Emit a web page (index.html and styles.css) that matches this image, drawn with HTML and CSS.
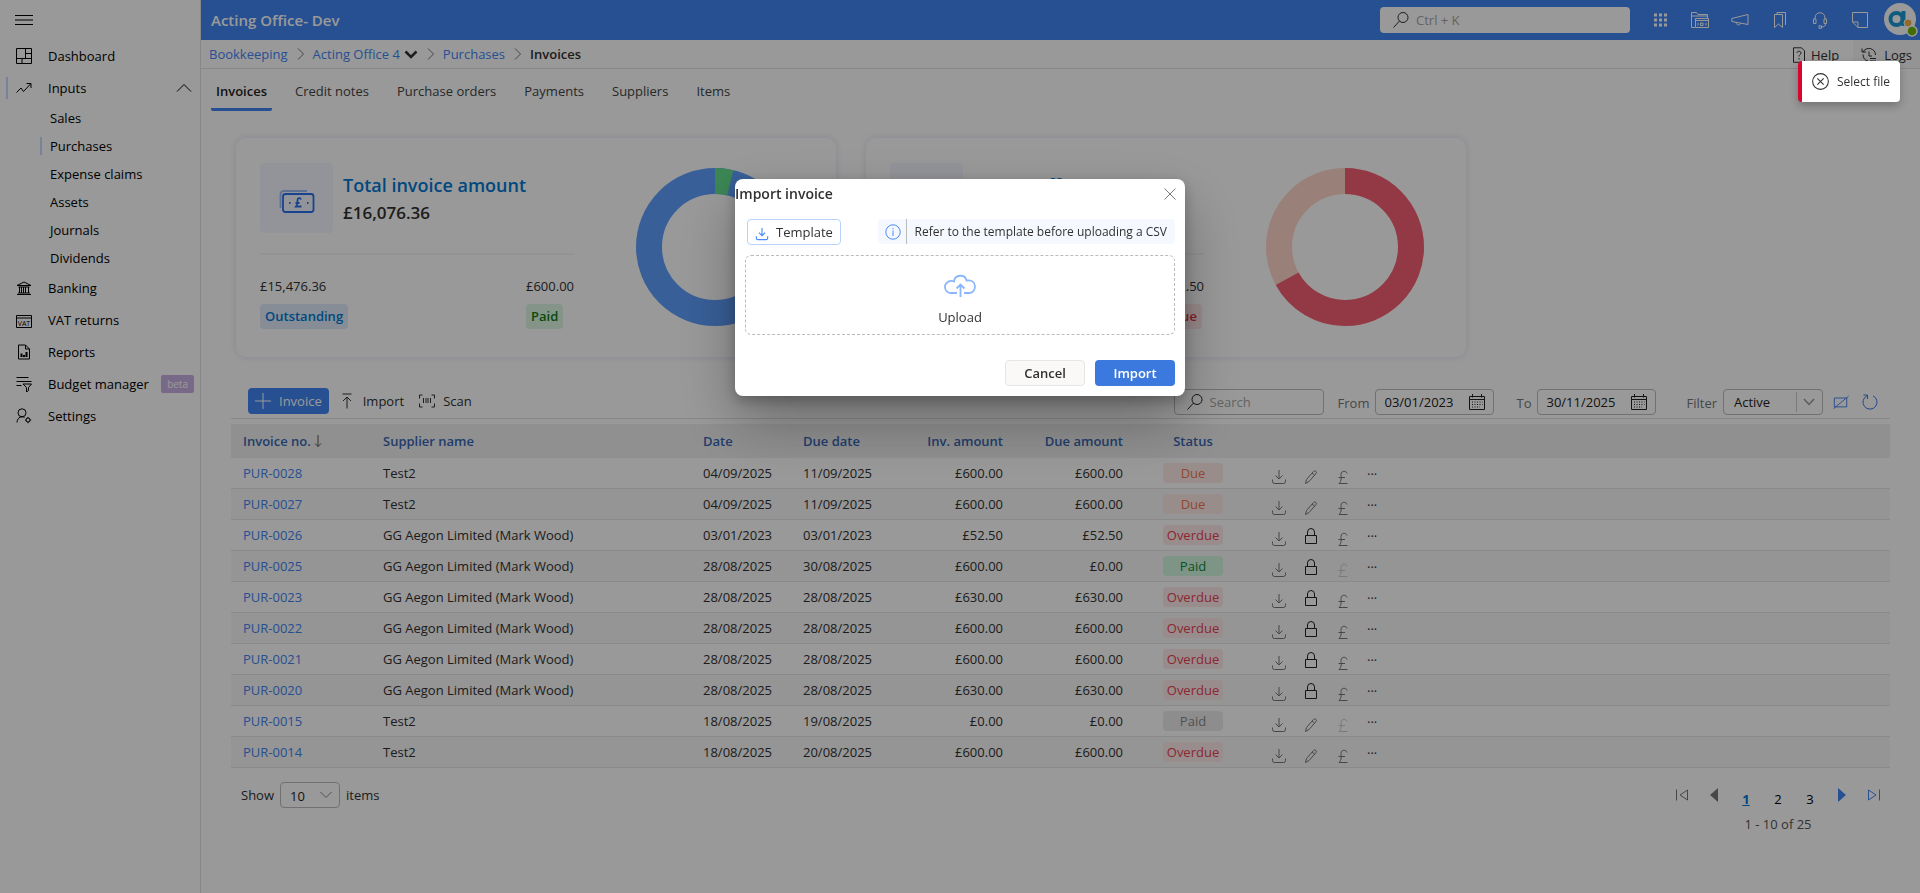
FILE: index.html
```html
<!DOCTYPE html>
<html lang="en">
<head>
<meta charset="utf-8">
<title>Acting Office - Purchases</title>
<link rel="stylesheet" href="styles.css">
</head>
<body>
<svg class="sprite" aria-hidden="true">
  <symbol id="i-down" viewBox="0 0 16 16"><path d="M8 1v9M4.500 6.500 8 10l3.500-3.500M1.500 10.500v2a2 2 0 0 0 2 2h9a2 2 0 0 0 2-2v-2"/></symbol>
  <symbol id="i-pencil" viewBox="0 0 16 16"><path d="M2.500 14.500l1-4L10.500 2.500a1.500 1.500 0 0 1 2.500 2L6 12.500zM9 4l2.500 2"/></symbol>
  <symbol id="i-lock" viewBox="0 0 16 16"><path d="M2.500 7.500h11v8h-11zM4.500 7.500V4a3.500 3.500 0 0 1 7 0v3.500"/></symbol>
  <symbol id="i-pound" viewBox="0 0 16 16"><path d="M12 4.500C11.500 1.500 6 1.200 6 5.500c0 3 1 6-2 9h8.500M3.500 8.500h6.500"/></symbol>
  <symbol id="i-search" viewBox="0 0 18 18"><path d="M11 1.500a5 5 0 1 1 0 10 5 5 0 0 1 0-10zM7.500 10 1.500 16.500"/></symbol>
  <symbol id="i-right" viewBox="0 0 8 12"><path d="M1 .5 6.500 6 1 11.500"/></symbol>
  <symbol id="i-cal" viewBox="0 0 18 16"><path d="M1.500 2.500h15v13h-15zM1.500 5.500h15M4.500 0v3.500M13.500 0v3.500"/><path stroke-dasharray="1 1.500" d="M4 8h10.500M4 10.500h10.500M4 13h8"/></symbol>
</svg>

<div class="app">
  <aside class="side">
    <button class="burger" aria-label="Menu"><svg viewBox="0 0 18 10"><path d="M0 .5h18M0 5h18M0 9.500h18"/></svg></button>
    <nav>
      <a class="item" href="#"><svg viewBox="0 0 16 16"><path d="M.5.500h15v15H.5zM9.500.500v10M.5 10.500h15M9.500 5.500h6M6 10.500v5"/></svg><span>Dashboard</span></a>
      <a class="item current" href="#"><svg viewBox="0 0 16 16"><path d="M.5 12.500 5 8l2.500 3.500L14.500 4M10.500 3.500h4.500V8"/></svg><span>Inputs</span><svg class="fold" viewBox="0 0 16 10"><path d="M1 8.500 8 1.500l7 7"/></svg></a>
      <a class="sub" href="#">Sales</a>
      <a class="sub current" href="#">Purchases</a>
      <a class="sub" href="#">Expense claims</a>
      <a class="sub" href="#">Assets</a>
      <a class="sub" href="#">Journals</a>
      <a class="sub" href="#">Dividends</a>
      <a class="item" href="#"><svg viewBox="0 0 16 16"><path d="M1 5.500 8 2l7 3.500zM2.500 7h11M3.500 7v6M5.500 7v6M7.500 7v6M9.500 7v6M12.500 7v6M2 13h12M1 14.500h14"/></svg><span>Banking</span></a>
      <a class="item" href="#"><svg viewBox="0 0 16 16" aria-hidden="true"><path d="M.5 3.500h15v12H.5zM.5 6h15"/><text x="8" y="13.500" text-anchor="middle">VAT</text></svg><span>VAT returns</span></a>
      <a class="item" href="#"><svg viewBox="0 0 16 16"><path d="M2.500 1h7l4 4v10h-11zM9.500 1v4h4"/><path class="thick" d="M5.500 9.500V13M8 11v2M10.500 8v5"/></svg><span>Reports</span></a>
      <a class="item" href="#"><svg viewBox="0 0 16 16"><path d="M.5 1.500h12M.5 5.500h15M.5 9.500h5M7 8h8.500l-3 3.500v3l-2 1.500v-4.500z"/></svg><span>Budget manager</span><em class="beta">beta</em></a>
      <a class="item" href="#"><svg viewBox="0 0 16 16"><path d="M6 .8a4 4 0 1 1 0 8 4 4 0 0 1 0-8zM1 14.500c0-3 2-5.700 5-5.700 1 0 2 .2 2.500.7M12 10a2 2 0 1 1 0 4 2 2 0 0 1 0-4zM12 9v1M12 14v1.200M9 12h1M14 12h1.200M10 10l.6.600M13.500 13.500l.6.600M14 10l-.6.600M10 14l.6-.6"/></svg><span>Settings</span></a>
    </nav>
  </aside>

  <div class="main">
    <header class="top">
      <h1>Acting Office- Dev</h1>
      <label class="global"><svg viewBox="0 0 18 18"><use href="#i-search"/></svg><input type="text" placeholder="Ctrl + K" aria-label="Search everything"></label>
      <div class="tools">
        <button aria-label="Apps"><svg viewBox="0 0 18 18"><path class="dots" d="M3 4h3M8 4h3M13 4h3M3 9h3M8 9h3M13 9h3M3 14h3M8 14h3M13 14h3"/></svg></button>
        <button aria-label="Files"><svg viewBox="0 0 18 18"><path d="M4 16.500H.5v-15h5l1.500 2h9.500V7M.5 5h16M4.500 7.500h13v9h-13zM4.500 9.500h13M7 12v2.500M9.500 12h2.500v2.500H9.500zM15 12v2.500"/></svg></button>
        <button aria-label="Announcements"><svg viewBox="0 0 18 18"><path d="M.8 7.500 17 3.500v10L.8 10.500zM5 11.500c0 3 4.500 3 4.500.8"/></svg></button>
        <button aria-label="Bookmarks"><svg viewBox="0 0 18 18"><path d="M3.500 3.500h8v13l-4-3.500-4 3.500zM6 3.500v-2h8.500V14"/></svg></button>
        <button aria-label="Support"><svg viewBox="0 0 18 18"><path d="M4 8V7c0-7 10-7 10 0v1M2.500 8H5v4.500H2.500zM13 8h2.500v4.500H13zM14.500 12.500c0 2.500-1.500 3.500-4 3.500M8 14.800h2.500v2.500H8z"/></svg></button>
        <button aria-label="Notes"><svg viewBox="0 0 18 18"><path d="M1.500 1.500h15v15H7l-5.500-5.500zM7 16.500V11H1.500"/></svg></button>
      </div>
      <button class="avatar" aria-label="Account"><svg viewBox="0 0 36 36"><circle cx="16" cy="16" r="16" fill="#fff"/><circle cx="12.500" cy="16" r="6" fill="none" stroke="#1c9ad6" stroke-width="4"/><path d="M19.500 8v15" stroke="#1c9ad6" stroke-width="4"/><circle cx="24" cy="20" r="4" fill="#f2b14e" stroke="#fff"/><circle cx="28" cy="28" r="5" fill="#6bb700" stroke="#fff" stroke-width="1.500"/></svg></button>
    </header>

    <div class="crumbs">
      <a href="#">Bookkeeping</a><svg class="sep" viewBox="0 0 8 12"><use href="#i-right"/></svg>
      <a href="#">Acting Office 4</a><svg class="drop" viewBox="0 0 14 9"><path d="M1.500 1.500 7 7l5.500-5.500"/></svg><svg class="sep" viewBox="0 0 8 12"><use href="#i-right"/></svg>
      <a href="#">Purchases</a><svg class="sep" viewBox="0 0 8 12"><use href="#i-right"/></svg>
      <strong>Invoices</strong>
      <div class="links">
        <button><svg viewBox="0 0 16 16"><path d="M2.500.800h8l3 3v11.500h-11zM6 6c0-2.500 4-2.300 4 0 0 1.500-2 1.500-2 3.500M8 11v1.500"/></svg>Help</button>
        <button class="logs"><svg viewBox="0 0 16 16"><path d="M2 5C5-1 14.500 1 14.500 8M1 1.500V5h4M2 7.500C2 11 4 13.500 7 14M8 4.500V9h3M9 11.500h6M9 14h6"/></svg>Logs</button>
      </div>
    </div>

    <nav class="tabs">
      <a class="on" href="#">Invoices</a><a href="#">Credit notes</a><a href="#">Purchase orders</a><a href="#">Payments</a><a href="#">Suppliers</a><a href="#">Items</a>
    </nav>

    <section class="cards">
      <article class="card">
        <div class="facts">
          <div class="lead">
            <div class="tile"><svg viewBox="0 0 36 24"><path class="pale" d="M1.500 18V4a3 3 0 0 1 3-3H28"/><rect x="4" y="4" width="30.500" height="18" rx="2.500"/><path d="M22 9.500c-.5-2-3.500-2-3.500.5 0 2 .5 4-1.500 6.500h5.500M16.500 13h4M10 13h1.500M28 13h1.500"/></svg></div>
            <div><h2>Total invoice amount</h2><p class="sum">£16,076.36</p></div>
          </div>
          <div class="split">
            <div><p>£15,476.36</p><span class="tag blue">Outstanding</span></div>
            <div><p>£600.00</p><span class="tag green">Paid</span></div>
          </div>
        </div>
        <svg class="donut" viewBox="0 0 158 158"><g fill="none" stroke-width="26"><circle cx="79" cy="79" r="66" stroke="#5f9fff"/><circle cx="79" cy="79" r="66" stroke="#64df8e" pathLength="100" stroke-dasharray="3.730 96.270" transform="rotate(-90 79 79)"/></g></svg>
      </article>
      <article class="card">
        <div class="facts">
          <div class="lead">
            <div class="tile"></div>
            <div><h2>Money off</h2><p class="sum">£15,476.36</p></div>
          </div>
          <div class="split">
            <div><p>£5,123.86</p><span class="tag peach">Due</span></div>
            <div><p>£10,352.50</p><span class="tag red">Overdue</span></div>
          </div>
        </div>
        <svg class="donut" viewBox="0 0 158 158"><g fill="none" stroke-width="26"><circle cx="79" cy="79" r="66" stroke="#ffd5c9"/><circle cx="79" cy="79" r="66" stroke="#f66073" pathLength="100" stroke-dasharray="67 33" transform="rotate(-90 79 79)"/></g></svg>
      </article>
    </section>

    <section class="list">
      <div class="bar">
        <button class="new"><svg viewBox="0 0 16 16"><path d="M8 0v16M0 8h16"/></svg>Invoice</button>
        <button class="plain"><svg viewBox="0 0 16 16"><path d="M3.500 1h9M8 15.500V4M4 8l4-4 4 4"/></svg>Import</button>
        <button class="plain scan"><svg viewBox="0 0 16 16"><path d="M3.500 2H.5v3.500M12.500 2h3v3.500M3.500 14H.5v-3.500M12.500 14h3v-3.500M4.500 5v5M7 5v5M9 5v5M11.500 5v5"/></svg>Scan</button>
        <div class="filters">
          <label class="field find"><svg viewBox="0 0 18 18"><use href="#i-search"/></svg><input type="text" placeholder="Search" aria-label="Search"></label>
          <label for="from">From</label>
          <div class="field date"><input id="from" type="text" value="03/01/2023"><svg viewBox="0 0 18 16"><use href="#i-cal"/></svg></div>
          <label for="to" class="gap">To</label>
          <div class="field date"><input id="to" type="text" value="30/11/2025"><svg viewBox="0 0 18 16"><use href="#i-cal"/></svg></div>
          <label for="state" class="wide">Filter</label>
          <div class="field pick"><select id="state"><option>Active</option></select><svg viewBox="0 0 12 8"><path d="M1 1l5 5.500L11 1"/></svg></div>
          <button class="act" aria-label="Clear filter"><svg viewBox="0 0 18 16"><path d="M1.500 3.500h14v10h-14zM.5 15.500 17.500 1.500"/></svg></button>
          <button class="act" aria-label="Refresh"><svg viewBox="0 0 16 16"><path d="M5 1.800a7 7 0 1 0 6 0M1.500 1h4v4"/></svg></button>
        </div>
      </div>

      <table>
        <colgroup><col class="c-no"><col class="c-sup"><col class="c-date"><col class="c-date"><col class="c-inv"><col class="c-due"><col class="c-stat"><col></colgroup>
        <thead><tr><th>Invoice no. <svg class="sort" viewBox="0 0 8 12"><path d="M4 0v11.500M1 8.500l3 3 3-3"/></svg></th><th>Supplier name</th><th>Date</th><th>Due date</th><th class="num">Inv. amount</th><th class="num">Due amount</th><th class="mid">Status</th><th></th></tr></thead>
        <tbody>
          <tr><td><a href="#">PUR-0028</a></td><td>Test2</td><td>04/09/2025</td><td>11/09/2025</td><td class="num">£600.00</td><td class="num">£600.00</td><td class="mid"><span class="pill due">Due</span></td><td><div class="ops"><button aria-label="Download"><svg><use href="#i-down"/></svg></button><button aria-label="Edit"><svg><use href="#i-pencil"/></svg></button><button aria-label="Pay"><svg><use href="#i-pound"/></svg></button><button class="more" aria-label="More">···</button></div></td></tr>
          <tr><td><a href="#">PUR-0027</a></td><td>Test2</td><td>04/09/2025</td><td>11/09/2025</td><td class="num">£600.00</td><td class="num">£600.00</td><td class="mid"><span class="pill due">Due</span></td><td><div class="ops"><button aria-label="Download"><svg><use href="#i-down"/></svg></button><button aria-label="Edit"><svg><use href="#i-pencil"/></svg></button><button aria-label="Pay"><svg><use href="#i-pound"/></svg></button><button class="more" aria-label="More">···</button></div></td></tr>
          <tr><td><a href="#">PUR-0026</a></td><td>GG Aegon Limited (Mark Wood)</td><td>03/01/2023</td><td>03/01/2023</td><td class="num">£52.50</td><td class="num">£52.50</td><td class="mid"><span class="pill over">Overdue</span></td><td><div class="ops"><button aria-label="Download"><svg><use href="#i-down"/></svg></button><button class="lock" aria-label="Locked"><svg><use href="#i-lock"/></svg></button><button aria-label="Pay"><svg><use href="#i-pound"/></svg></button><button class="more" aria-label="More">···</button></div></td></tr>
          <tr><td><a href="#">PUR-0025</a></td><td>GG Aegon Limited (Mark Wood)</td><td>28/08/2025</td><td>30/08/2025</td><td class="num">£600.00</td><td class="num">£0.00</td><td class="mid"><span class="pill paid">Paid</span></td><td><div class="ops"><button aria-label="Download"><svg><use href="#i-down"/></svg></button><button class="lock" aria-label="Locked"><svg><use href="#i-lock"/></svg></button><button class="off" aria-label="Pay"><svg><use href="#i-pound"/></svg></button><button class="more" aria-label="More">···</button></div></td></tr>
          <tr><td><a href="#">PUR-0023</a></td><td>GG Aegon Limited (Mark Wood)</td><td>28/08/2025</td><td>28/08/2025</td><td class="num">£630.00</td><td class="num">£630.00</td><td class="mid"><span class="pill over">Overdue</span></td><td><div class="ops"><button aria-label="Download"><svg><use href="#i-down"/></svg></button><button class="lock" aria-label="Locked"><svg><use href="#i-lock"/></svg></button><button aria-label="Pay"><svg><use href="#i-pound"/></svg></button><button class="more" aria-label="More">···</button></div></td></tr>
          <tr><td><a href="#">PUR-0022</a></td><td>GG Aegon Limited (Mark Wood)</td><td>28/08/2025</td><td>28/08/2025</td><td class="num">£600.00</td><td class="num">£600.00</td><td class="mid"><span class="pill over">Overdue</span></td><td><div class="ops"><button aria-label="Download"><svg><use href="#i-down"/></svg></button><button class="lock" aria-label="Locked"><svg><use href="#i-lock"/></svg></button><button aria-label="Pay"><svg><use href="#i-pound"/></svg></button><button class="more" aria-label="More">···</button></div></td></tr>
          <tr><td><a href="#">PUR-0021</a></td><td>GG Aegon Limited (Mark Wood)</td><td>28/08/2025</td><td>28/08/2025</td><td class="num">£600.00</td><td class="num">£600.00</td><td class="mid"><span class="pill over">Overdue</span></td><td><div class="ops"><button aria-label="Download"><svg><use href="#i-down"/></svg></button><button class="lock" aria-label="Locked"><svg><use href="#i-lock"/></svg></button><button aria-label="Pay"><svg><use href="#i-pound"/></svg></button><button class="more" aria-label="More">···</button></div></td></tr>
          <tr><td><a href="#">PUR-0020</a></td><td>GG Aegon Limited (Mark Wood)</td><td>28/08/2025</td><td>28/08/2025</td><td class="num">£630.00</td><td class="num">£630.00</td><td class="mid"><span class="pill over">Overdue</span></td><td><div class="ops"><button aria-label="Download"><svg><use href="#i-down"/></svg></button><button class="lock" aria-label="Locked"><svg><use href="#i-lock"/></svg></button><button aria-label="Pay"><svg><use href="#i-pound"/></svg></button><button class="more" aria-label="More">···</button></div></td></tr>
          <tr><td><a href="#">PUR-0015</a></td><td>Test2</td><td>18/08/2025</td><td>19/08/2025</td><td class="num">£0.00</td><td class="num">£0.00</td><td class="mid"><span class="pill void">Paid</span></td><td><div class="ops"><button aria-label="Download"><svg><use href="#i-down"/></svg></button><button aria-label="Edit"><svg><use href="#i-pencil"/></svg></button><button class="off" aria-label="Pay"><svg><use href="#i-pound"/></svg></button><button class="more" aria-label="More">···</button></div></td></tr>
          <tr><td><a href="#">PUR-0014</a></td><td>Test2</td><td>18/08/2025</td><td>20/08/2025</td><td class="num">£600.00</td><td class="num">£600.00</td><td class="mid"><span class="pill over">Overdue</span></td><td><div class="ops"><button aria-label="Download"><svg><use href="#i-down"/></svg></button><button aria-label="Edit"><svg><use href="#i-pencil"/></svg></button><button aria-label="Pay"><svg><use href="#i-pound"/></svg></button><button class="more" aria-label="More">···</button></div></td></tr>
        </tbody>
      </table>

      <footer class="foot">
        <label for="size">Show</label>
        <div class="field size"><select id="size"><option>10</option></select><svg viewBox="0 0 12 8"><path d="M.5 1 6 6.500 11.500 1"/></svg></div>
        <span>items</span>
        <div class="pager">
          <div class="pages">
            <button aria-label="First page"><svg viewBox="0 0 14 14"><path d="M1.500 1.500v11M12.500 2v10L5 7z"/></svg></button>
            <button aria-label="Previous page"><svg viewBox="0 0 14 14"><path class="solid" d="M11 0v14L3 7z"/></svg></button>
            <a class="here" href="#">1</a><a href="#">2</a><a href="#">3</a>
            <button class="go" aria-label="Next page"><svg viewBox="0 0 14 14"><path class="solid" d="M3 0v14l8-7z"/></svg></button>
            <button class="go" aria-label="Last page"><svg viewBox="0 0 14 14"><path d="M12.500 1.500v11M1.500 2v10L9 7z"/></svg></button>
          </div>
          <p>1 - 10 of 25</p>
        </div>
      </footer>
    </section>
  </div>
</div>

<div class="veil">
  <div class="modal" role="dialog" aria-labelledby="dlg">
    <div class="head"><h2 id="dlg">Import invoice</h2><button class="close" aria-label="Close"><svg viewBox="0 0 12 12"><path d="M.5.500l11 11M11.500.500l-11 11"/></svg></button></div>
    <div class="hint">
      <button class="template"><svg viewBox="0 0 16 16"><use href="#i-down"/></svg>Template</button>
      <div class="note"><svg viewBox="0 0 16 16"><circle cx="8" cy="8" r="7.200"/><path d="M8 6.500V12M8 4v1.300"/></svg><p>Refer to the template before uploading a CSV</p></div>
    </div>
    <button class="drop-zone"><svg viewBox="0 0 32 24"><path d="M13 19H7.500a6 6 0 0 1-1-12 C8 6.500 9 7 10 7.500 11 0 21 0 22.500 6.500c5.500-1 8.500 2 8.500 6 0 3.500-2.500 6.500-6 6.500H20M16.500 23V11M12.500 14.500l4-4 4 4"/></svg><span>Upload</span></button>
    <div class="ends"><button class="cancel">Cancel</button><button class="ok">Import</button></div>
  </div>
</div>
<div class="toast" role="alert"><svg viewBox="0 0 16 16"><circle cx="8" cy="8" r="7.400"/><path d="M5 5l6 6M11 5l-6 6"/></svg>Select file</div>
</body>
</html>
```
FILE: styles.css
```css
* { box-sizing: border-box; }
body { margin: 0; font: 13px/20px "Open Sans", "Noto Sans", sans-serif; color: #323130; background: #fff; }
h1, h2, p { margin: 0; }
a { color: #4285f4; text-decoration: none; }
button { font: inherit; color: inherit; background: none; border: 0; padding: 0; }
input, select { font: inherit; color: inherit; background: none; border: 0; padding: 0; outline: 0; min-width: 0; appearance: none; }
input::placeholder { color: #a6a6a6; opacity: 1; }
svg { fill: none; stroke: currentColor; flex: none; display: block; }
svg text { font-size: 7px; fill: currentColor; stroke: none; }
.sprite { display: none; }

.app { display: flex; min-height: 100vh; }
.side { flex: 0 0 201px; min-width: 0; border-right: 1px solid #e1e1e1; color: #000; }
.burger { display: block; height: 40px; padding: 0 15px; }
.burger svg { width: 18px; height: 10px; }
.item, .sub { display: flex; align-items: center; color: #000; white-space: nowrap; }
.item { height: 32px; padding: 0 6px 0 16px; }
.item > svg:first-child { width: 16px; height: 16px; margin-right: 16px; }
.item.current { background: linear-gradient(#c7dbff, #c7dbff) 6px center / 2px 22px no-repeat; }
.item .fold { width: 16px; height: 10px; margin: 0 2px 0 auto; }
.thick { stroke-width: 2; }
.sub { height: 28px; padding-left: 50px; }
.sub.current { background: linear-gradient(#c7dbff, #c7dbff) 40px center / 2px 18px no-repeat; }
.beta { margin-left: auto; background: #c8b0e4; color: #fff; font-style: normal; font-size: 10px; line-height: 18px; padding: 0 6px; border-radius: 2px; }

.main { flex: 1; min-width: 0; }
.top { display: flex; align-items: center; height: 40px; background: #4285f4; color: #fff; padding-left: 10px; }
.top h1 { font-size: 15px; font-weight: 600; }
.global { display: flex; align-items: center; width: 250px; height: 26px; background: #fff; border-radius: 4px; margin-left: auto; padding-left: 12px; gap: 6px; color: #323130; }
.global svg, .find svg { width: 18px; height: 18px; }
.global input { flex: 1; }
.tools { display: flex; padding-left: 10px; }
.tools button { width: 40px; display: grid; place-items: center; }
.tools svg { width: 18px; height: 18px; }
.dots { stroke-width: 3; }
.avatar { padding: 2px 0 0 4px; }
.avatar svg { width: 36px; height: 36px; stroke: none; }

.crumbs { display: flex; align-items: center; height: 29px; border-bottom: 1px solid #e1e1e1; padding-left: 8px; }
.crumbs strong { font-weight: 600; }
.sep { width: 8px; height: 12px; margin: 0 8px 0 9px; stroke: #777; }
.drop { width: 14px; height: 9px; margin-left: 4px; stroke-width: 2.500; }
.links { display: flex; margin-left: auto; }
.links button { display: flex; align-items: center; gap: 4px; height: 28px; padding: 2px 14px 0 0; }
.links svg { width: 16px; height: 16px; }
.links .logs { background: #f7f7f7; padding: 2px 8px 0; gap: 7px; }

.tabs { display: flex; padding-left: 10px; height: 42px; }
.tabs a { display: flex; align-items: center; color: #444; padding: 5px 5px 0; margin-right: 18px; border-bottom: 3px solid transparent; border-radius: 2px; }
.tabs .on { color: #222; font-weight: 600; border-color: #4285f4; }

.cards { display: flex; gap: 30px; padding: 27px 35px 0; }
.card { display: flex; justify-content: space-between; width: 600px; height: 219px; border-radius: 10px; padding: 25px 42px 0 24px; box-shadow: 0 0 7px #e2e2f6; }
.facts { width: 314px; }
.lead { display: flex; gap: 10px; height: 92px; border-bottom: 2px solid #f5f5f8; }
.tile { display: grid; place-items: center; width: 73px; height: 70px; background: #f4f7ff; border-radius: 4px; }
.tile svg { width: 36px; height: 24px; margin-top: 8px; color: #2a6ff0; stroke-width: 1.800; }
.tile .pale { stroke: #9dbcf5; }
.card h2 { font-size: 18px; line-height: 28px; font-weight: 600; color: #0078d4; margin-top: 8px; }
.sum { font-size: 17px; line-height: 28px; font-weight: 600; }
.split { display: flex; justify-content: space-between; padding-top: 21px; }
.tag { display: inline-block; margin-top: 8px; line-height: 25px; padding: 0 5px; border-radius: 4px; font-weight: 600; }
.blue { background: #dfecfc; color: #0078d4; }
.green { background: #dcf7e5; color: #107c10; }
.peach { background: #ffe9e2; color: #f2795c; }
.red { background: #ffe8ea; color: #e8303f; }
.donut { width: 158px; height: 158px; margin-top: 5px; }

.list { padding: 31px 30px 0; }
.bar { display: flex; align-items: center; height: 31px; border-bottom: 1px solid #e1e1e1; padding: 0 12px 4px 17px; margin-bottom: 5px; }
.new, .plain { display: flex; align-items: center; height: 26px; }
.new { background: #4285f4; color: #fff; border-radius: 4px; padding: 0 7px; gap: 8px; }
.plain { padding-left: 10px; gap: 8px; }
.scan { padding-left: 15px; }
.bar button > svg { width: 16px; height: 16px; }
.filters { display: flex; align-items: center; margin-left: auto; padding-top: 2px; color: #777; }
.filters > label:not(.field) { padding: 2px 6px 0 14px; }
.filters > label.gap { padding-left: 22px; }
.filters > label.wide { padding-left: 30px; }
.field { display: flex; align-items: center; height: 26px; border: 1px solid #bdbdbd; border-radius: 4px; color: #222; }
.find { width: 150px; padding-left: 11px; gap: 6px; }
.find input { width: 100px; }
.date { width: 119px; padding: 0 7px 0 8px; justify-content: space-between; }
.date input { width: 76px; }
.date svg { width: 18px; height: 16px; }
.pick { width: 100px; padding-left: 10px; }
.pick select { width: 63px; height: 20px; border-right: 1px solid #ccc; }
.pick svg { width: 12px; height: 8px; margin-left: 6px; stroke: #999; stroke-width: 1.500; }
.act { color: #3a78ec; margin-left: 10px; }
.act + .act { margin-left: 13px; }

table { width: 100%; table-layout: fixed; border-collapse: separate; border-spacing: 0; }
.c-no { width: 140px; } .c-sup { width: 320px; } .c-date { width: 100px; } .c-inv { width: 124px; } .c-due { width: 120px; } .c-stat { width: 116px; }
th, td { text-align: left; padding: 0 12px; white-space: nowrap; }
th { height: 34px; background: #f0f0f0; font-weight: 600; color: #3767b4; }
td { height: 31px; border-bottom: 1px solid #e6e6e6; }
tbody tr:nth-child(even) { background: #f8f8f8; }
.num { text-align: right; }
.mid { text-align: center; padding: 0; }
.sort { display: inline-block; width: 8px; height: 12px; vertical-align: -1px; color: #555; }
.pill { display: block; width: 60px; margin: 0 auto; line-height: 20px; border-radius: 4px; }
.due { background: #ffece8; color: #f27650; }
.over { background: #ffeaec; color: #e84352; }
.paid { background: #d2f7e1; color: #0e8a35; }
.void { background: #ececec; color: #888; }
.ops { display: flex; gap: 16px; padding: 7px 0 0 8px; color: #777; }
.ops svg { width: 16px; height: 16px; }
.ops .lock { color: #222; padding-bottom: 3px; margin-top: -3px; }
.ops .off { color: #ccc; }
.ops .more { line-height: 10px; height: 10px; color: #333; }

.foot { display: flex; padding: 14px 0 0 10px; line-height: 26px; gap: 6px; }
.size { width: 60px; padding-left: 9px; }
.size select { width: 30px; height: 24px; }
.size svg { width: 12px; height: 8px; stroke: #888; }
.pager { margin-left: auto; color: #777; text-align: center; }
.pages { display: flex; line-height: 18px; }
.pages > * { width: 32px; display: grid; place-items: center; }
.pages a { color: #000; padding-top: 8px; }
.pages .here { color: #0078d4; font-weight: 700; text-decoration: underline; }
.pages svg { width: 14px; height: 14px; }
.pages .go { color: #4285f4; }
.solid { fill: currentColor; stroke: none; }
.pager p { padding-top: 3px; color: #555; }

.veil { position: fixed; inset: 0; display: flex; justify-content: center; align-items: flex-start; padding-top: 20vh; background: rgba(0, 0, 0, .4); }
.modal { width: 450px; background: #fff; border-radius: 8px; padding-bottom: 10px; box-shadow: 0 26px 58px rgba(0, 0, 0, .3), 0 5px 14px rgba(0, 0, 0, .25); }
.head { display: flex; align-items: center; justify-content: space-between; height: 30px; padding-right: 9px; }
.head h2 { font-size: 14px; font-weight: 600; }
.close svg { width: 12px; height: 12px; stroke: #777; }
.hint { display: flex; justify-content: space-between; align-items: center; padding: 10px 10px 10px 12px; }
.template { display: flex; align-items: center; gap: 7px; height: 26px; padding: 0 7px; border: 1px solid #b9d1fb; border-radius: 4px; }
.template svg { width: 14px; height: 14px; margin-top: 4px; color: #4a8af4; stroke-width: 1.300; }
.note { display: flex; align-items: center; height: 25px; background: #f5f9ff; border-radius: 4px; padding: 0 8px 0 7px; gap: 5px; font-size: 12px; }
.note svg { width: 16px; height: 16px; color: #4a8af4; }
.note p { border-left: 1px solid #bbb; line-height: 25px; padding-left: 8px; }
.drop-zone { display: grid; justify-items: center; align-content: start; width: 430px; height: 80px; margin: 0 10px; padding-top: 18px; border: 1px dashed #bbb; border-radius: 6px; }
.drop-zone svg { width: 32px; height: 24px; color: #8cb6fb; stroke-width: 1.800; }
.drop-zone span { padding-top: 9px; }
.ends { display: flex; justify-content: flex-end; gap: 10px; padding: 25px 10px 0; }
.ends button { width: 80px; height: 26px; border-radius: 4px; font-weight: 600; }
.cancel { background: #faf9f8; border: 1px solid #e6e6e6; }
.ends .ok { background: #3c79de; color: #fff; }

.toast { position: fixed; top: 61px; right: 20px; display: flex; align-items: center; gap: 8px; height: 41px; padding: 0 10px; background: #fff; border-left: 4px solid #d9052e; border-radius: 4px; font-size: 12px; box-shadow: 0 4px 10px rgba(0, 0, 0, .25); }
.toast svg { width: 17px; height: 17px; }
```
